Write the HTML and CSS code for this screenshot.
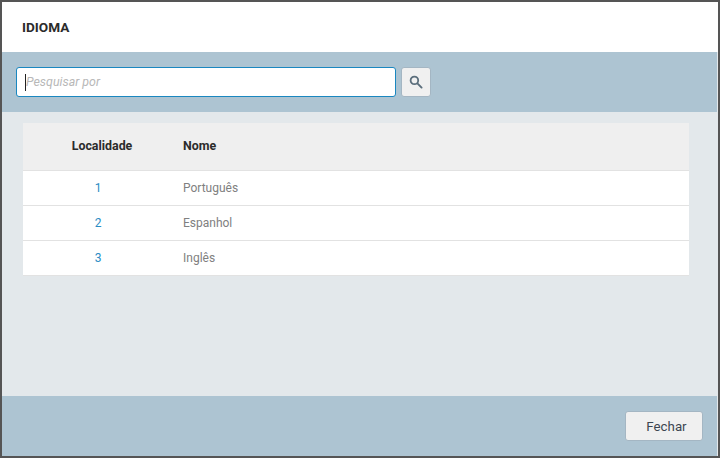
FILE: index.html
```html
<!DOCTYPE html>
<html>
<head>
    <title>Idioma</title>
    <link rel="stylesheet" href="styles.css">
</head>
<body>
    <div class="modal">
        <div class="modal-header">
            <h1 class="modal-title">IDIOMA</h1>
        </div>

        <!-- Search -->
        <div class="search-bar">
            <div class="search-input">
                <span class="caret"></span>
                <span class="placeholder">Pesquisar por</span>
            </div>
            <button class="search-btn" aria-label="Pesquisar">
                <svg width="14" height="14" viewBox="0 0 14 14">
                    <circle cx="5.4" cy="5.4" r="3.8" fill="none" stroke="#5b6e7c" stroke-width="1.8"/>
                    <path d="M8.4 8.4L12.6 12.6" stroke="#5b6e7c" stroke-width="1.9" stroke-linecap="round"/>
                </svg>
            </button>
        </div>

        <div class="modal-body">
            <table class="list-table">
                <thead>
                    <tr>
                        <th class="col-id">Localidade</th>
                        <th>Nome</th>
                    </tr>
                </thead>
                <tbody>
                    <tr>
                        <td class="col-id">1</td>
                        <td>Português</td>
                    </tr>
                    <tr>
                        <td class="col-id">2</td>
                        <td>Espanhol</td>
                    </tr>
                    <tr>
                        <td class="col-id">3</td>
                        <td>Inglês</td>
                    </tr>
                </tbody>
            </table>
        </div>

        <div class="modal-footer">
            <button class="close-btn">Fechar</button>
        </div>
    </div>
</body>
</html>
```

FILE: styles.css
```css
html, body {
    height: 100%;
}
body {
    margin: 0;
    background-color: #555;
    font-family: Roboto, Arial, sans-serif;
    overflow: hidden;
}
.modal {
    display: flex;
    flex-direction: column;
    box-sizing: border-box;
    width: 716px;
    height: 454px;
    margin: 2px 2px 0;
    background-color: #e3e8eb;
}
.modal-header {
    display: flex;
    align-items: center;
    height: 50px;
    padding-left: 20px;
    background-color: #fff;
}
.modal-title {
    margin: 0;
    font-size: 13.6px;
    font-weight: 700;
    color: #2b2b2b;
}
.search-bar {
    display: flex;
    align-items: center;
    gap: 5px;
    height: 60px;
    margin-right: 1px;
    padding-left: 14px;
    background-color: #adc4d2;
}
.search-input {
    display: flex;
    align-items: center;
    box-sizing: border-box;
    width: 380px;
    height: 30px;
    padding-left: 8px;
    background-color: #fff;
    border: 1px solid #1a87c0;
    border-radius: 3px;
}
.caret {
    width: 1px;
    height: 17px;
    background-color: #222;
}
.placeholder {
    padding-bottom: 2px;
    font-size: 12.4px;
    font-style: italic;
    color: #b8b8b8;
}
.search-btn {
    display: flex;
    align-items: center;
    justify-content: center;
    box-sizing: border-box;
    width: 30px;
    height: 30px;
    padding: 0;
    background-color: #f0f0f0;
    border: 1px solid #a4b6c3;
    border-radius: 3px;
}
.modal-body {
    flex: 1;
    padding: 11px 29px 0 21px;
}
.list-table {
    width: 100%;
    border-collapse: collapse;
    font-size: 12px;
}
.list-table th {
    box-sizing: border-box;
    height: 47px;
    padding: 0 0 2px 10px;
    text-align: left;
    font-size: 12.4px;
    font-weight: 700;
    color: #2b2b2b;
    background-color: #efefef;
}
.list-table td {
    height: 34px;
    padding: 0 0 0 10px;
    color: #808080;
    background-color: #fff;
    border-top: 1px solid #e2e2e2;
}
.list-table tr:last-child td {
    border-bottom: 1px solid #e2e2e2;
}
.list-table .col-id {
    box-sizing: border-box;
    width: 150px;
    text-align: center;
}
.list-table th.col-id {
    padding-left: 8px;
}
.list-table td.col-id {
    padding-left: 0;
    color: #2b8cc4;
}
.modal-footer {
    display: flex;
    align-items: center;
    justify-content: flex-end;
    height: 60px;
    margin-right: 1px;
    padding-right: 14px;
    background-color: #adc4d2;
}
.close-btn {
    box-sizing: border-box;
    width: 78px;
    height: 30px;
    padding: 0 0 0 5px;
    font-family: Roboto, Arial, sans-serif;
    font-size: 13.3px;
    color: #3c4650;
    background-color: #f0f0f0;
    border: 1px solid #a4b6c3;
    border-radius: 3px;
}
```
